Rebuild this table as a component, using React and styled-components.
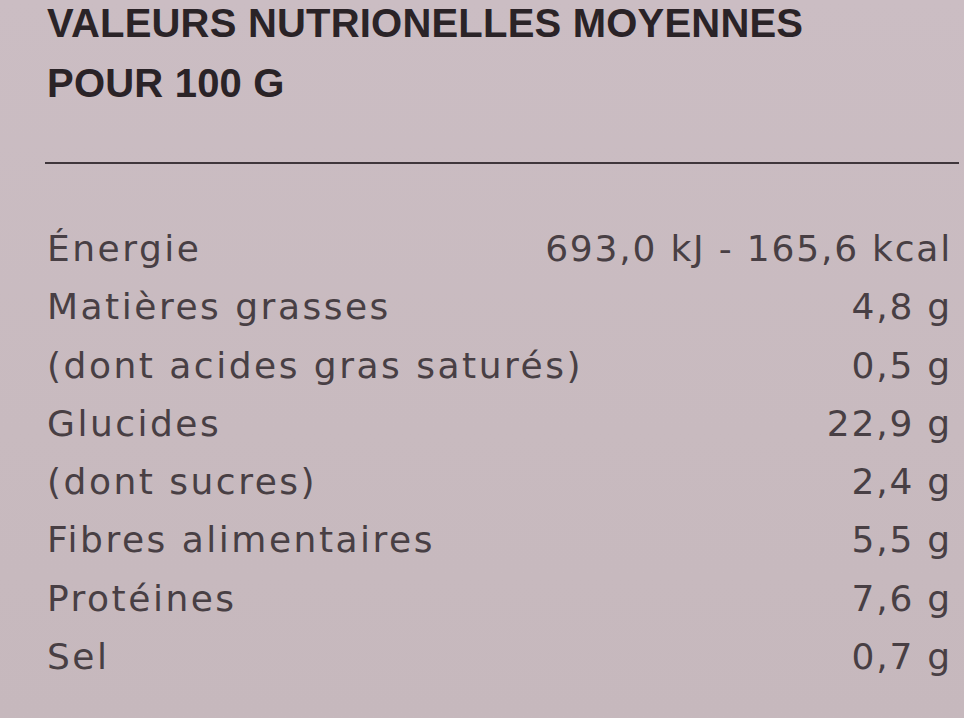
import styled, { createGlobalStyle } from "styled-components";

const Global = createGlobalStyle`
  html, body {
    margin: 0;
    padding: 0;
    background: #c9bbc1;
  }
`;

const Label = styled.div`
  width: 964px;
  height: 718px;
  box-sizing: border-box;
  padding: 0 14px 0 47px;
  background: linear-gradient(180deg, #cbbdc3 0%, #c8babf 60%, #c6b8bd 100%);
  font-family: "Liberation Sans", Arial, sans-serif;
  overflow: hidden;
`;

const Title = styled.h1`
  margin: -7px 0 0;
  font-size: 40px;
  line-height: 60px;
  font-weight: 700;
  color: #2a2327;
  letter-spacing: 0.2px;
`;

const Rule = styled.hr`
  margin: 49px -9px 0 -2px;
  border: 0;
  height: 2px;
  background: #3f363b;
`;

const Table = styled.div`
  margin-top: 56px;
  display: flex;
  flex-direction: column;
`;

const Row = styled.div`
  display: flex;
  justify-content: space-between;
  align-items: baseline;
  height: 58.3px;
  font-family: "DejaVu Sans", "Liberation Sans", sans-serif;
  font-size: 36px;
  line-height: 58px;
  letter-spacing: 2.5px;
  color: #483f44;
`;

const Name = styled.span``;

const Value = styled.span`
  text-align: right;
  letter-spacing: 1.8px;
  margin-right: -2px;
`;

const rows = [
  ["Énergie", "693,0 kJ - 165,6 kcal"],
  ["Matières grasses", "4,8 g"],
  ["(dont acides gras saturés)", "0,5 g"],
  ["Glucides", "22,9 g"],
  ["(dont sucres)", "2,4 g"],
  ["Fibres alimentaires", "5,5 g"],
  ["Protéines", "7,6 g"],
  ["Sel", "0,7 g"],
];

export default function App() {
  return (
    <>
      <Global />
      <Label>
        <Title>
          VALEURS NUTRIONELLES MOYENNES
          <br />
          POUR 100 G
        </Title>
        <Rule />
        <Table>
          {rows.map(([name, value]) => (
            <Row key={name}>
              <Name>{name}</Name>
              <Value>{value}</Value>
            </Row>
          ))}
        </Table>
      </Label>
    </>
  );
}
